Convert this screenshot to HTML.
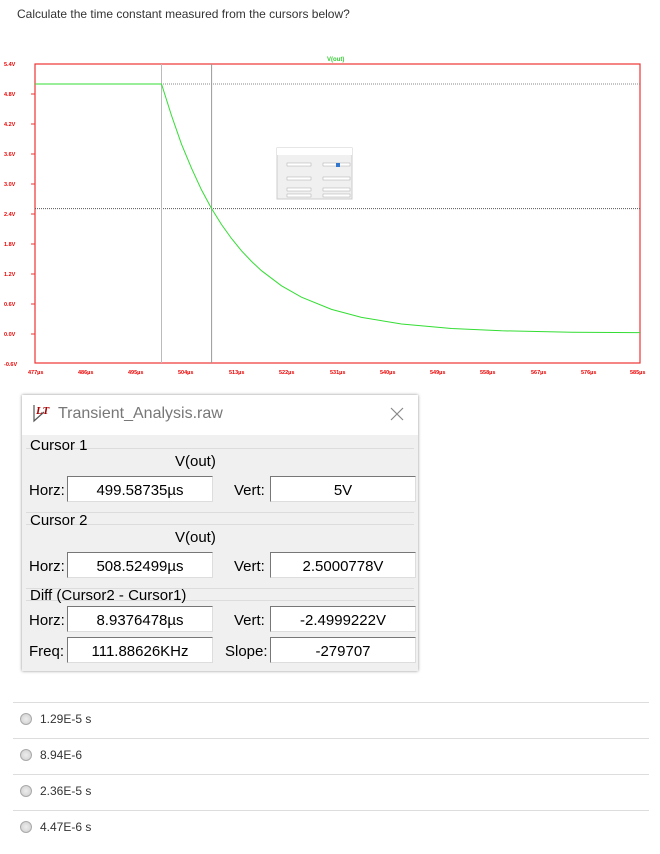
<!DOCTYPE html>
<html><head><meta charset="utf-8"><style>
body{margin:0;width:660px;height:854px;background:#fff;font-family:"Liberation Sans",sans-serif;position:relative;overflow:hidden}
.q{position:absolute;left:17px;top:7px;font-size:12px;color:#333}
.dlg{position:absolute;left:22px;top:395px;width:396px;height:276px;background:#f0f0f0;box-shadow:0 0 3px rgba(0,0,0,.45);}
.tb{position:absolute;left:0;top:0;width:396px;height:40px;background:#fff}
.t{position:absolute;font-size:15px;color:#000;white-space:nowrap}
.box{position:absolute;background:#fff;border-top:1px solid #777;border-left:1px solid #777;border-right:1px solid #ddd;border-bottom:1px solid #ddd;height:24px;font-size:15px;text-align:center;line-height:27px;color:#000}
.sep{position:absolute;left:4px;width:388px;height:1px;background:#dcdcdc}
.opt{position:absolute;left:0;width:636px;border-top:1px solid #ddd}
.rad{position:absolute;left:20px;width:10px;height:10px;border-radius:50%;border:1px solid #aaa;background:radial-gradient(#eee,#ccc)}
.ol{position:absolute;left:40px;font-size:12px;color:#333}
</style></head><body>
<div class="q">Calculate the time constant measured from the cursors below?</div>
<svg style="position:absolute;left:0;top:0" width="660" height="390" font-family="Liberation Sans" font-weight="bold" font-size="5.5" fill="#e00">
<rect x="35" y="64" width="605" height="299" fill="none" stroke="#e33" stroke-width="1.2"/>
<text x="327" y="61" fill="#3c3" font-size="6">V(out)</text>
<line x1="35" y1="84" x2="640" y2="84" stroke="#888" stroke-dasharray="1,1"/>
<line x1="35" y1="208.6" x2="640" y2="208.6" stroke="#555" stroke-dasharray="1,1"/>
<line x1="161.5" y1="64" x2="161.5" y2="363" stroke="#bbb"/>
<line x1="211.6" y1="64" x2="211.6" y2="363" stroke="#999"/>
<path d="M35 84 L161.5 84 L171.5 115.5 L181.5 144.2 L191.5 168.2 L201.5 189.9 L211.6 208.6 L221.5 224.5 L231.5 238.5 L241.5 250.8 L251.5 261.4 L261.5 270.7 L281.5 285.8 L301.5 297.2 L331.5 309.4 L361.5 317.4 L401.5 324 L451.5 328.5 L501.5 330.8 L571.5 332.2 L640 332.6" fill="none" stroke="#3d3" stroke-width="1"/>
<g>
<text x="4" y="66">5.4V</text><text x="4" y="96">4.8V</text><text x="4" y="126">4.2V</text><text x="4" y="156">3.6V</text><text x="4" y="186">3.0V</text><text x="4" y="216">2.4V</text><text x="4" y="246">1.8V</text><text x="4" y="276">1.2V</text><text x="4" y="306">0.6V</text><text x="4" y="336">0.0V</text><text x="4" y="366">-0.6V</text>
<text x="28" y="374">477µs</text><text x="78" y="374">486µs</text><text x="128" y="374">495µs</text><text x="178" y="374">504µs</text><text x="229" y="374">513µs</text><text x="279" y="374">522µs</text><text x="330" y="374">531µs</text><text x="380" y="374">540µs</text><text x="430" y="374">549µs</text><text x="480" y="374">558µs</text><text x="531" y="374">567µs</text><text x="581" y="374">576µs</text><text x="630" y="374">585µs</text>
</g>
<g stroke="#e33">
<line x1="31" y1="94" x2="35" y2="94"/><line x1="31" y1="124" x2="35" y2="124"/><line x1="31" y1="154" x2="35" y2="154"/><line x1="31" y1="184" x2="35" y2="184"/><line x1="31" y1="214" x2="35" y2="214"/><line x1="31" y1="244" x2="35" y2="244"/><line x1="31" y1="274" x2="35" y2="274"/><line x1="31" y1="304" x2="35" y2="304"/><line x1="31" y1="334" x2="35" y2="334"/>
</g>
<rect x="277" y="148" width="75" height="51" fill="#f0f0f0" stroke="#ccc"/>
<rect x="277" y="148" width="75" height="7" fill="#fff"/>
<g fill="#fff" stroke="#999" stroke-width=".4"><rect x="287" y="163" width="24" height="3"/><rect x="323" y="163" width="27" height="3"/><rect x="287" y="177" width="24" height="3"/><rect x="323" y="177" width="27" height="3"/><rect x="287" y="188" width="24" height="3"/><rect x="323" y="188" width="27" height="3"/><rect x="287" y="194" width="24" height="3"/><rect x="323" y="194" width="27" height="3"/></g>
<rect x="336" y="163" width="4" height="4" fill="#37c"/>
</svg>
<div class="dlg">
<div class="tb">
<svg style="position:absolute;left:10px;top:8px" width="22" height="20"><path d="M2 2 L2 18 L12 9" fill="none" stroke="#555" stroke-width="1.2"/><text x="4" y="11" font-family="Liberation Serif" font-style="italic" font-weight="bold" font-size="11" fill="#a00">LT</text></svg>
<div class="t" style="left:36px;top:10px;color:#777;font-size:16px">Transient_Analysis.raw</div>
<svg style="position:absolute;left:368px;top:12px" width="14" height="14"><path d="M1 1L13 13M13 1L1 13" stroke="#888" stroke-width="1.2"/></svg>
</div>
<div class="sep" style="top:53px"></div>
<div class="t" style="left:8px;top:42px">Cursor 1</div>
<div class="t" style="left:153px;top:58px">V(out)</div>
<div class="t" style="left:7px;top:87px">Horz:</div>
<div class="box" style="left:45px;top:81px;width:144px">499.58735µs</div>
<div class="t" style="left:212px;top:87px">Vert:</div>
<div class="box" style="left:248px;top:81px;width:144px">5V</div>
<div class="sep" style="top:117px"></div><div class="sep" style="top:129px"></div>
<div class="t" style="left:8px;top:117px">Cursor 2</div>
<div class="t" style="left:153px;top:134px">V(out)</div>
<div class="t" style="left:7px;top:163px">Horz:</div>
<div class="box" style="left:45px;top:157px;width:144px">508.52499µs</div>
<div class="t" style="left:212px;top:163px">Vert:</div>
<div class="box" style="left:248px;top:157px;width:144px">2.5000778V</div>
<div class="sep" style="top:193px"></div><div class="sep" style="top:205px"></div>
<div class="t" style="left:8px;top:192px">Diff (Cursor2 - Cursor1)</div>
<div class="t" style="left:7px;top:217px">Horz:</div>
<div class="box" style="left:45px;top:211px;width:144px">8.9376478µs</div>
<div class="t" style="left:212px;top:217px">Vert:</div>
<div class="box" style="left:248px;top:211px;width:144px">-2.4999222V</div>
<div class="t" style="left:7px;top:248px">Freq:</div>
<div class="box" style="left:45px;top:242px;width:144px">111.88626KHz</div>
<div class="t" style="left:203px;top:248px">Slope:</div>
<div class="box" style="left:248px;top:242px;width:144px">-279707</div>
</div>
<div class="opt" style="top:702px;left:13px"></div>
<div class="rad" style="top:713px"></div><div class="ol" style="top:712px">1.29E-5 s</div>
<div class="opt" style="top:738px;left:13px"></div>
<div class="rad" style="top:749px"></div><div class="ol" style="top:748px">8.94E-6</div>
<div class="opt" style="top:774px;left:13px"></div>
<div class="rad" style="top:785px"></div><div class="ol" style="top:784px">2.36E-5 s</div>
<div class="opt" style="top:810px;left:13px"></div>
<div class="rad" style="top:821px"></div><div class="ol" style="top:820px">4.47E-6 s</div>
</body></html>
